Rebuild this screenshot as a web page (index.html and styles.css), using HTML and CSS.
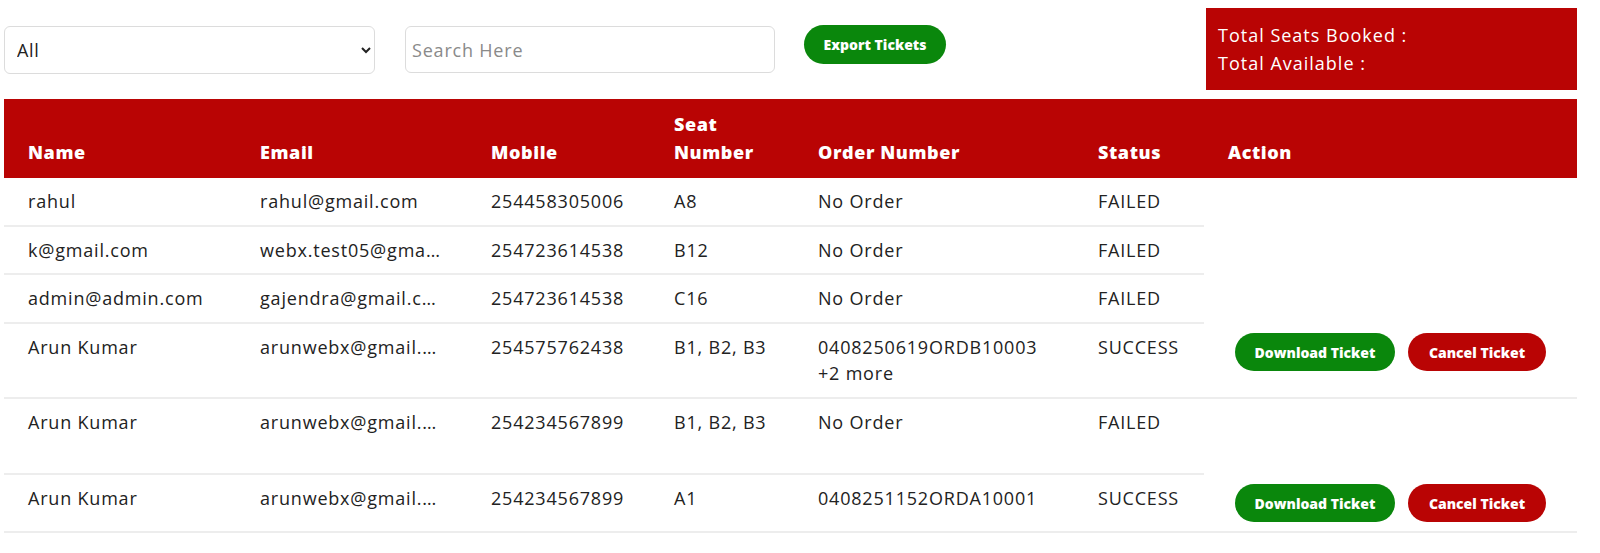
FILE: index.html
```html
<!DOCTYPE html>
<html lang="en">
<head>
<meta charset="utf-8">
<title>Tickets</title>
<link rel="stylesheet" href="styles.css">
</head>
<body>
<div class="page">
  <div class="toolbar">
    <select class="filter">
      <option>All</option>
      <option>SUCCESS</option>
      <option>FAILED</option>
    </select>
    <input class="search" type="text" placeholder="Search Here">
    <button class="btn btn-green export">Export Tickets</button>
    <div class="stats">
      <div>Total Seats Booked :</div>
      <div>Total Available :</div>
    </div>
  </div>

  <table class="tickets">
    <colgroup>
      <col class="c-name"><col class="c-email"><col class="c-mobile"><col class="c-seat"><col class="c-order"><col class="c-status"><col class="c-action">
    </colgroup>
    <thead>
      <tr>
        <th>Name</th>
        <th>Email</th>
        <th>Mobile</th>
        <th>Seat<br>Number</th>
        <th>Order Number</th>
        <th>Status</th>
        <th>Action</th>
      </tr>
    </thead>
    <tbody>
      <tr>
        <td>rahul</td>
        <td>rahul@gmail.com</td>
        <td>254458305006</td>
        <td>A8</td>
        <td>No Order</td>
        <td>FAILED</td>
        <td class="empty"></td>
      </tr>
      <tr class="short">
        <td>k@gmail.com</td>
        <td>webx.test05@gma…</td>
        <td>254723614538</td>
        <td>B12</td>
        <td>No Order</td>
        <td>FAILED</td>
        <td class="empty"></td>
      </tr>
      <tr>
        <td>admin@admin.com</td>
        <td>gajendra@gmail.c…</td>
        <td>254723614538</td>
        <td>C16</td>
        <td>No Order</td>
        <td>FAILED</td>
        <td class="empty"></td>
      </tr>
      <tr>
        <td>Arun Kumar</td>
        <td>arunwebx@gmail.…</td>
        <td>254575762438</td>
        <td>B1, B2, B3</td>
        <td>0408250619ORDB10003<br>+2 more</td>
        <td>SUCCESS</td>
        <td class="actions"><div class="btns"><button class="btn btn-green">Download Ticket</button><button class="btn btn-red">Cancel Ticket</button></div></td>
      </tr>
      <tr class="tall">
        <td>Arun Kumar</td>
        <td>arunwebx@gmail.…</td>
        <td>254234567899</td>
        <td>B1, B2, B3</td>
        <td>No Order</td>
        <td>FAILED</td>
        <td class="empty"></td>
      </tr>
      <tr>
        <td>Arun Kumar</td>
        <td>arunwebx@gmail.…</td>
        <td>254234567899</td>
        <td>A1</td>
        <td>0408251152ORDA10001</td>
        <td>SUCCESS</td>
        <td class="actions"><div class="btns"><button class="btn btn-green">Download Ticket</button><button class="btn btn-red">Cancel Ticket</button></div></td>
      </tr>
    </tbody>
  </table>
</div>
</body>
</html>
```

FILE: styles.css
```css
* { box-sizing: border-box; }

body {
  margin: 0;
  background: #ffffff;
  font-family: "Open Sans", "DejaVu Sans", sans-serif;
  color: #222222;
}

.page {
  padding: 8px 23px 0 4px;
}

.toolbar {
  display: flex;
  align-items: flex-start;
}

.filter {
  margin-top: 18px;
  width: 371px;
  height: 48px;
  border: 1px solid #dcdcdc;
  border-radius: 6px;
  background: #ffffff;
  padding: 0 8px 0 8px;
  font-family: "Open Sans", sans-serif;
  font-size: 18px;
  letter-spacing: 0.6px;
  color: #222222;
}

.search {
  margin-top: 18px;
  margin-left: 30px;
  width: 370px;
  height: 47px;
  border: 1px solid #dcdcdc;
  border-radius: 6px;
  padding: 0 6px;
  font-family: "Open Sans", sans-serif;
  font-size: 18px;
  letter-spacing: 0.8px;
  color: #222222;
}

.search::placeholder {
  color: #8a8a8a;
}

.btn {
  border: none;
  border-radius: 20px;
  color: #ffffff;
  font-family: "Open Sans", sans-serif;
  font-weight: 800;
  font-size: 14px;
  height: 38px;
  padding: 0;
  white-space: nowrap;
  cursor: pointer;
}

.btn-green { background: #0a870c; }
.btn-red { background: #b90404; }

.export {
  margin-top: 17px;
  margin-left: 29px;
  width: 142px;
  height: 39px;
}

.stats {
  margin-left: auto;
  width: 371px;
  height: 82px;
  background: #b90404;
  color: #ffffff;
  padding: 13px 12px;
  font-size: 18px;
  letter-spacing: 1px;
  line-height: 28px;
}

.tickets {
  margin-top: 9px;
  width: 1573px;
  border-collapse: collapse;
  table-layout: fixed;
}

.c-name { width: 232px; }
.c-email { width: 231px; }
.c-mobile { width: 183px; }
.c-seat { width: 144px; }
.c-order { width: 280px; }
.c-status { width: 130px; }
.c-action { width: 373px; }

.tickets th {
  background: #b90404;
  color: #ffffff;
  text-align: left;
  vertical-align: bottom;
  font-weight: 800;
  font-size: 18px;
  letter-spacing: 0.6px;
  line-height: 28px;
  height: 79px;
  padding: 0 24px 12px;
}

.tickets td {
  vertical-align: top;
  font-size: 18px;
  letter-spacing: 0.8px;
  line-height: 26px;
  padding: 10px 24px 11px;
  border-bottom: 2px solid #ededed;
  white-space: nowrap;
  overflow: hidden;
}

.tickets tr.short td { padding-bottom: 10px; }
.tickets tr.tall td { height: 76px; }

.tickets td.empty { border-bottom: none; }

.tickets td.actions {
  padding: 10px 0 9px 31px;
  letter-spacing: 0;
}

.btns {
  display: flex;
  gap: 13px;
}

.btns .btn-green { width: 160px; }
.btns .btn-red { width: 138px; }
```
